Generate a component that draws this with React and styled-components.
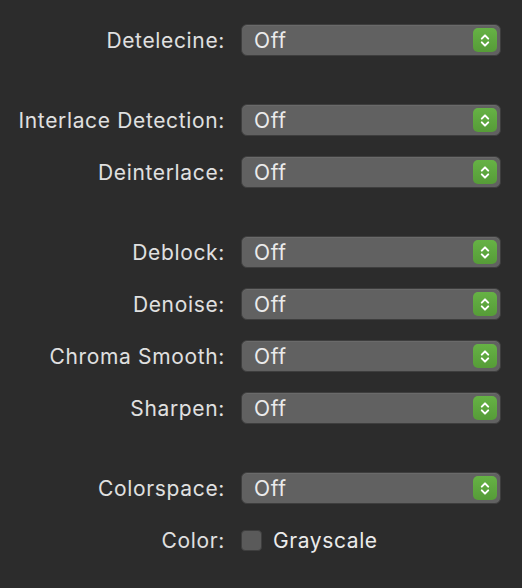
import styled, {createGlobalStyle} from 'styled-components'

const GlobalStyle = createGlobalStyle`
  html, body {
    margin: 0;
    padding: 0;
    background: #2c2c2c;
  }
  body {
    font-family: Inter, "Liberation Sans", sans-serif;
  }
`

const Panel = styled.div`
  width: 522px;
  height: 588px;
  box-sizing: border-box;
  padding-top: 24px;
  display: flex;
  flex-direction: column;
  gap: 48px;
  background: #2c2c2c;
`

const Group = styled.div`
  display: flex;
  flex-direction: column;
  gap: 20px;
`

const Row = styled.div`
  display: grid;
  grid-template-columns: 225px 260px;
  column-gap: 16px;
  align-items: center;
  height: 32px;
`

const Label = styled.div`
  text-align: right;
  color: #e0e0e0;
  font-size: 21px;
  letter-spacing: 0.65px;
  white-space: nowrap;
`

const Popup = styled.div`
  height: 32px;
  box-sizing: border-box;
  border-radius: 6px;
  background: #616161;
  border: 1px solid #3e3e3e;
  box-shadow: inset 0 1px 0 #6a6a6a;
  display: flex;
  align-items: center;
  justify-content: space-between;
  padding: 0 3px 0 12px;
`

const Value = styled.span`
  color: #ebebeb;
  font-size: 21px;
  letter-spacing: 0.6px;
`

const Stepper = styled.div`
  width: 24px;
  height: 24px;
  border-radius: 5px;
  background: linear-gradient(#66b245, #569c38);
  display: flex;
  align-items: center;
  justify-content: center;
`

const CheckRow = styled.div`
  display: flex;
  align-items: center;
  gap: 11px;
`

const Box = styled.div`
  width: 21px;
  height: 21px;
  border-radius: 4px;
  background: #5a5a5a;
  border: 1px solid #3e3e3e;
  box-sizing: border-box;
`

function Chevrons() {
    return (
        <svg width="10" height="15" viewBox="0 0 10 15">
            <path d="M1.8 5.6 L5 2.4 L8.2 5.6 M1.8 9.4 L5 12.6 L8.2 9.4" fill="none" stroke="#fff"
                  strokeWidth="2" strokeLinecap="round" strokeLinejoin="round"/>
        </svg>
    )
}

function Select({label}) {
    return (
        <Row>
            <Label>{label}:</Label>
            <Popup>
                <Value>Off</Value>
                <Stepper><Chevrons/></Stepper>
            </Popup>
        </Row>
    )
}

const groups = [
    ['Detelecine'],
    ['Interlace Detection', 'Deinterlace'],
    ['Deblock', 'Denoise', 'Chroma Smooth', 'Sharpen'],
]

export default function App() {
    return (
        <>
            <GlobalStyle/>
            <Panel>
                {groups.map((g, i) => (
                    <Group key={i}>
                        {g.map(label => <Select key={label} label={label}/>)}
                    </Group>
                ))}
                <Group>
                    <Select label="Colorspace"/>
                    <Row>
                        <Label>Color:</Label>
                        <CheckRow>
                            <Box/>
                            <Value>Grayscale</Value>
                        </CheckRow>
                    </Row>
                </Group>
            </Panel>
        </>
    )
}
